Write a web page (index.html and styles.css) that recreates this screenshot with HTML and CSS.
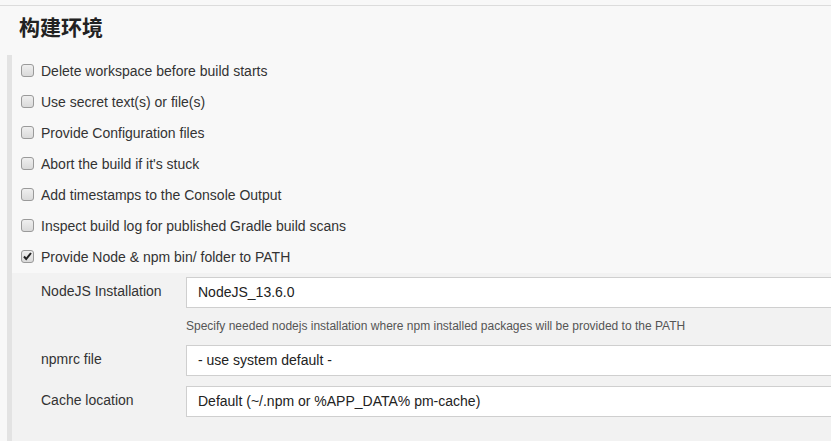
FILE: index.html
```html
<!DOCTYPE html>
<html lang="zh">
<head>
<meta charset="utf-8">
<title>构建环境</title>
<link rel="stylesheet" href="styles.css">
</head>
<body>
<div class="topline"></div>
<h2 class="title">构建环境</h2>
<div class="section">
  <div class="row">
    <svg class="cb" width="13" height="13" viewBox="0 0 13 13"><defs><linearGradient id="g" x1="0" y1="0" x2="0" y2="1"><stop offset="0" stop-color="#f0f0f0"/><stop offset="1" stop-color="#d9d9d9"/></linearGradient></defs><rect x="0.5" y="0.5" width="12" height="12" rx="2.5" fill="url(#g)" stroke="#9a9a9a"/></svg>
    <span class="lbl">Delete workspace before build starts</span>
  </div>
  <div class="row">
    <svg class="cb" width="13" height="13" viewBox="0 0 13 13"><rect x="0.5" y="0.5" width="12" height="12" rx="2.5" fill="url(#g)" stroke="#9a9a9a"/></svg>
    <span class="lbl">Use secret text(s) or file(s)</span>
  </div>
  <div class="row">
    <svg class="cb" width="13" height="13" viewBox="0 0 13 13"><rect x="0.5" y="0.5" width="12" height="12" rx="2.5" fill="url(#g)" stroke="#9a9a9a"/></svg>
    <span class="lbl">Provide Configuration files</span>
  </div>
  <div class="row">
    <svg class="cb" width="13" height="13" viewBox="0 0 13 13"><rect x="0.5" y="0.5" width="12" height="12" rx="2.5" fill="url(#g)" stroke="#9a9a9a"/></svg>
    <span class="lbl">Abort the build if it's stuck</span>
  </div>
  <div class="row">
    <svg class="cb" width="13" height="13" viewBox="0 0 13 13"><rect x="0.5" y="0.5" width="12" height="12" rx="2.5" fill="url(#g)" stroke="#9a9a9a"/></svg>
    <span class="lbl">Add timestamps to the Console Output</span>
  </div>
  <div class="row">
    <svg class="cb" width="13" height="13" viewBox="0 0 13 13"><rect x="0.5" y="0.5" width="12" height="12" rx="2.5" fill="url(#g)" stroke="#9a9a9a"/></svg>
    <span class="lbl">Inspect build log for published Gradle build scans</span>
  </div>
  <div class="row">
    <svg class="cb" width="13" height="13" viewBox="0 0 13 13"><rect x="0.5" y="0.5" width="12" height="12" rx="2.5" fill="url(#g)" stroke="#9a9a9a"/><path d="M3 6.5 L5.2 9 L10 3" fill="none" stroke="#222" stroke-width="2"/></svg>
    <span class="lbl">Provide Node &amp; npm bin/ folder to PATH</span>
  </div>
  <div class="nested">
    <div class="field">
      <div class="flabel">NodeJS Installation</div>
      <div class="fval"><div class="input">NodeJS_13.6.0</div></div>
    </div>
    <div class="help">Specify needed nodejs installation where npm installed packages will be provided to the PATH</div>
    <div class="field">
      <div class="flabel">npmrc file</div>
      <div class="fval"><div class="input">- use system default -</div></div>
    </div>
    <div class="field gap">
      <div class="flabel">Cache location</div>
      <div class="fval"><div class="input">Default (~/.npm or %APP_DATA% pm-cache)</div></div>
    </div>
  </div>
</div>
</body>
</html>
```
FILE: styles.css
```css
html, body {
  margin: 0;
  padding: 0;
  background: #f8f8f8;
  font-family: "Liberation Sans", Arial, "Noto Sans CJK SC", sans-serif;
  color: #333;
  overflow: hidden;
}
.topline {
  margin-top: 5px;
  border-top: 1px solid #dcdcdc;
  height: 0;
}
.title {
  margin: 0;
  padding: 8px 0 0 19px;
  height: 49px;
  box-sizing: border-box;
  font-size: 21px;
  line-height: 24px;
  font-weight: bold;
  color: #222;
  font-family: "Noto Sans CJK SC", sans-serif;
}
.section {
  margin-left: 7px;
  border-left: 5px solid #e3e3e3;
  padding-top: 1px;
  min-height: 400px;
}
.row {
  height: 31px;
  display: flex;
  align-items: center;
  padding-left: 9px;
}
.cb {
  flex: none;
  margin-right: 7px;
  margin-top: -2px;
}
.lbl {
  font-size: 14px;
  line-height: 17px;
}
.nested {
  background: #f2f2f2;
  padding-top: 4px;
  padding-left: 29px;
  min-height: 200px;
}
.field {
  display: flex;
  align-items: flex-start;
}
.field.gap {
  margin-top: 10px;
}
.flabel {
  width: 145px;
  flex: none;
  font-size: 14px;
  line-height: 17px;
  padding-top: 6px;
}
.fval {
  flex: 1;
  margin-right: -20px;
}
.input {
  height: 29px;
  border: 1px solid #cfcfcf;
  background: #fff;
  font-size: 14px;
  line-height: 29px;
  padding-left: 11px;
  color: #222;
}
.help {
  padding-left: 145px;
  font-size: 12px;
  line-height: 15px;
  color: #555;
  padding-top: 11px;
  height: 15px;
  margin-bottom: 11px;
}
```
